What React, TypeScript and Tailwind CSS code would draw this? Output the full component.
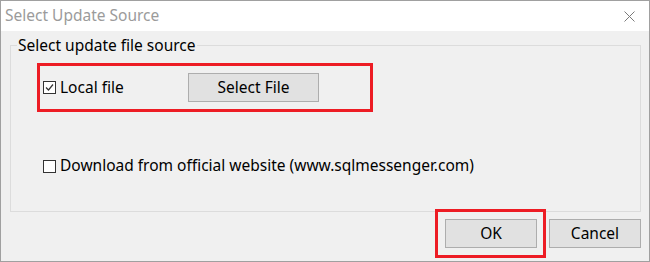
import React from 'react'

function CheckBox({ checked }: { checked?: boolean }) {
  return (
    <span className="w-[13px] h-[13px] border border-[#333] bg-white flex items-center justify-center shrink-0">
      {checked && (
        <svg width="11" height="11" viewBox="0 0 11 11">
          <polyline points="2,5.5 4.5,8 9,2.5" fill="none" stroke="#333" strokeWidth="1.2" />
        </svg>
      )}
    </span>
  )
}

function WinButton({ label, wide }: { label: string; wide?: boolean }) {
  return (
    <button
      className={
        (wide ? 'w-[131px] ' : 'w-[92px] ') +
        'h-[29px] bg-[#e1e1e1] border border-[#adadad] text-[15.5px] text-black leading-none'
      }
    >
      {label}
    </button>
  )
}

export default function App() {
  return (
    <div className="w-[650px] h-[262px] border border-[#a0a0a0] bg-[#f0f0f0] flex flex-col font-['Noto_Sans',sans-serif]">
      {/* title bar */}
      <div className="h-[30px] bg-white flex items-center justify-between pl-[4px] pr-[14px]">
        <span className="text-[15.5px] text-[#9b9b9b]">Select Update Source</span>
        <svg width="11" height="11" viewBox="0 0 11 11">
          <path d="M0.5 0.5 L10.5 10.5 M10.5 0.5 L0.5 10.5" stroke="#7a7a7a" strokeWidth="1" />
        </svg>
      </div>

      {/* body */}
      <div className="flex-1 flex flex-col pl-[9px] pr-[8px]">
        <fieldset className="mt-[4px] h-[177px] border border-[#dcdcdc] px-0 pb-0 flex flex-col">
          <legend className="ml-[6px] px-[1px] text-[15.5px] leading-[20px] text-black">Select update file source</legend>

          <div className="mt-[8px] ml-[26px] w-[336px] h-[49px] border-[3px] border-[#ed1c24] flex items-center pl-[3px]">
            <label className="w-[145px] flex items-center gap-[4px] text-[15.5px] text-black">
              <CheckBox checked />
              Local file
            </label>
            <WinButton label="Select File" wide />
          </div>

          <label className="mt-[44px] ml-[32px] h-[20px] flex items-center gap-[4px] text-[15.5px] text-black">
            <CheckBox />
            Download from official website (www.sqlmessenger.com)
          </label>
        </fieldset>

        {/* footer */}
        <div className="flex justify-end gap-[12px] pt-[7px]">
          <div className="relative">
            <WinButton label="OK" />
            <div className="absolute -top-[10px] -left-[10px] -bottom-[10px] -right-[9px] border-[3px] border-[#ed1c24] pointer-events-none" />
          </div>
          <WinButton label="Cancel" />
        </div>
      </div>
    </div>
  )
}
